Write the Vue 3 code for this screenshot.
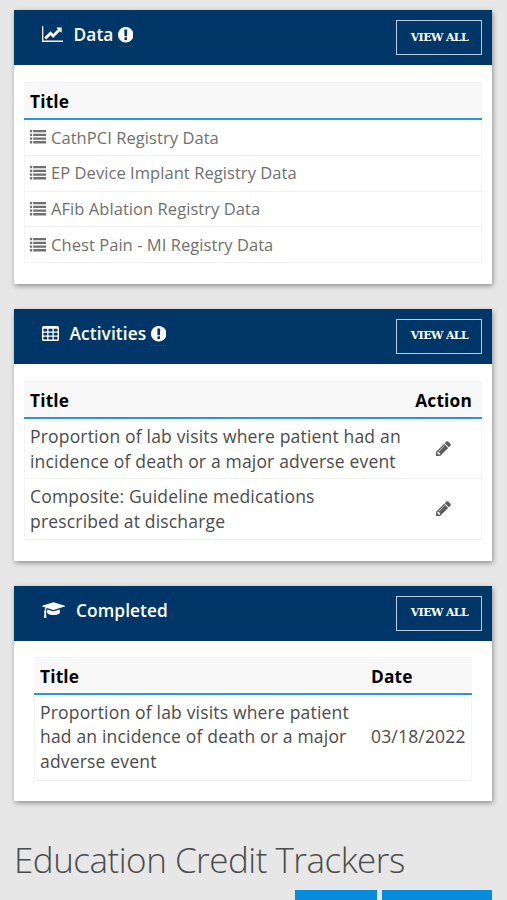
<script setup>
const registries = [
  'CathPCI Registry Data',
  'EP Device Implant Registry Data',
  'AFib Ablation Registry Data',
  'Chest Pain - MI Registry Data',
]
const activities = [
  'Proportion of lab visits where patient had an incidence of death or a major adverse event',
  'Composite: Guideline medications prescribed at discharge',
]
const alertPath = 'M896 128q209 0 385.5 103t279.5 279.5 103 385.5-103 385.5-279.5 279.5-385.5 103-385.5-103-279.5-279.5-103-385.5 103-385.5 279.5-279.5 385.5-103zm128 1247v-190q0-14-9-23.5t-22-9.5h-192q-13 0-23 10t-10 23v190q0 13 10 23t23 10h192q13 0 22-9.5t9-23.5zm-2-344l18-621q0-12-10-18-10-8-24-8h-220q-14 0-24 8-10 6-10 18l17 621q0 10 10 17.5t24 7.5h185q14 0 23.5-7.5t10.5-17.5z'
</script>

<template>
  <main class="page">
    <section class="card data">
      <header class="bar">
        <svg class="chart" viewBox="0 0 2048 1536"><path transform="translate(0 -128)" d="M2048 1536v128h-2048v-1536h128v1408h1920zm-128-1248v435q0 21-19.5 29.5t-35.5-7.5l-121-121-633 633q-10 10-23 10t-23-10l-233-233-416 416-192-192 585-585q10-10 23-10t23 10l233 233 464-464-121-121q-16-16-7.5-35.5t29.5-19.5h435q14 0 23 9t9 23z" /></svg>
        <h2 class="name">Data</h2>
        <span class="alert"><svg viewBox="128 128 1536 1536"><path :d="alertPath" /></svg></span>
        <button class="view">VIEW ALL</button>
      </header>
      <div class="table">
        <div class="thead"><span>Title</span></div>
        <div v-for="item in registries" :key="item" class="row link">
          <svg class="list" viewBox="0 0 16 14">
            <path d="M0 0h2.2v2.3H0zM3.2 0H16v2.3H3.2zM0 3.7h2.2V6H0zM3.2 3.7H16V6H3.2zM0 7.4h2.2v2.3H0zM3.2 7.4H16v2.3H3.2zM0 11.1h2.2v2.3H0zM3.2 11.1H16v2.3H3.2z" />
          </svg>
          <a>{{ item }}</a>
        </div>
      </div>
    </section>

    <section class="card activities">
      <header class="bar">
        <svg class="grid" viewBox="0 0 17 15"><path fill-rule="evenodd" d="M1.5 0h14A1.5 1.5 0 0 1 17 1.5v12a1.5 1.5 0 0 1-1.5 1.5h-14A1.5 1.5 0 0 1 0 13.5v-12A1.5 1.5 0 0 1 1.5 0zM1.4 2.8v2.7h3.8V2.8zM6.5 2.8v2.7h4V2.8zM11.8 2.8v2.7h3.8V2.8zM1.4 6.8v2.7h3.8V6.8zM6.5 6.8v2.7h4V6.8zM11.8 6.8v2.7h3.8V6.8zM1.4 10.8v2.7h3.8v-2.7zM6.5 10.8v2.7h4v-2.7zM11.8 10.8v2.7h3.8v-2.7z" /></svg>
        <h2 class="name">Activities</h2>
        <span class="alert"><svg viewBox="128 128 1536 1536"><path :d="alertPath" /></svg></span>
        <button class="view">VIEW ALL</button>
      </header>
      <div class="table">
        <div class="thead"><span>Title</span><span class="action">Action</span></div>
        <div v-for="item in activities" :key="item" class="row">
          <p class="text">{{ item }}</p>
          <span class="edit">
            <svg viewBox="128 128 1536 1536"><path d="M491 1536l91-91-235-235-91 91v107h128v128h107zm523-928q0-22-22-22-10 0-17 7l-542 542q-7 7-7 17 0 22 22 22 10 0 17-7l542-542q7-7 7-17zm-54-192l416 416-832 832h-416v-416zm683 96q0 53-37 90l-166 166-416-416 166-165q36-38 90-38 53 0 91 38l235 234q37 39 37 91z" /></svg>
          </span>
        </div>
      </div>
    </section>

    <section class="card completed">
      <header class="bar">
        <svg class="cap" viewBox="0 128 2304 1536"><path d="M1774 836l18 316q4 69-82 128t-235 93.5-323 34.5-323-34.5-235-93.5-82-128l18-316 574 181q22 7 48 7t48-7zm530-324q0 23-22 31l-1120 352q-4 1-10 1t-10-1l-652-206q-43 34-71 111.5t-34 178.5q63 36 63 109 0 69-58 107l58 433q2 14-8 25-9 11-24 11h-192q-15 0-24-11-10-11-8-25l58-433q-58-38-58-107 0-73 65-111 11-207 98-330l-333-104q-22-8-22-31t22-31l1120-352q4-1 10-1t10 1l1120 352q22 8 22 31z" /></svg>
        <h2 class="name">Completed</h2>
        <button class="view">VIEW ALL</button>
      </header>
      <div class="table">
        <div class="thead"><span>Title</span><span class="date">Date</span></div>
        <div class="row">
          <p class="text">Proportion of lab visits where patient had an incidence of death or a major adverse event</p>
          <span class="date">03/18/2022</span>
        </div>
      </div>
    </section>

    <h1 class="heading">Education Credit Trackers</h1>
    <div class="tabs"><span class="tab small"></span><span class="tab large"></span></div>
  </main>
</template>

<style>
body { background: #e7e7e7; }
</style>

<style scoped>
.page {
  box-sizing: border-box;
  width: 507px;
  height: 900px;
  padding: 10px 15px 0 14px;
  overflow: hidden;
  background: #e7e7e7;
  color: #4b4b4b;
  font: 17.5px/24.7px "Open Sans", "Noto Sans", sans-serif;
  letter-spacing: 0.18px;
}
.card {
  box-sizing: border-box;
  background: #fff;
  box-shadow: 1px 2px 5px rgba(0, 0, 0, 0.38);
}
.data { height: 274px; margin-bottom: 25px; }
.activities { height: 251.5px; margin-bottom: 25px; }
.completed { height: 215.5px; }
.bar {
  box-sizing: border-box;
  display: flex;
  align-items: flex-start;
  height: 55px;
  padding: 10px 10px 0 28px;
  background: #003768;
  color: #fff;
}
svg { display: block; fill: currentColor; flex: none; }
.chart { width: 21px; height: 16px; margin: 6px 10.5px 0 0; }
.grid { width: 17px; height: 15px; margin: 7px 10.5px 0 0; }
.cap { width: 23px; height: 16px; margin: 6px 11px 0 0; }
.name { margin: 3px 0 0; font-size: 17.3px; font-weight: 600; line-height: 24px; letter-spacing: 0.1px; }
.alert { margin: 7px 0 0 4.5px; padding-bottom: 3px; border-bottom: 1px dotted #2b4c6b; }
.alert svg { width: 15.5px; height: 15.5px; }
.view {
  box-sizing: border-box;
  width: 86px;
  height: 35px;
  margin: 0 -0.4px 0 auto;
  padding: 0;
  border: 1px solid #b9cbdc;
  background: none;
  color: #fff;
  font: bold 11px/16px "Roboto Slab", "DejaVu Serif", serif;
  letter-spacing: -0.6px;
  white-space: nowrap;
}
.completed .view, .activities .view { padding-bottom: 1px; }
.table { margin: 17px 10px 0; border: solid #f4f4f4; border-width: 0 1px; }
.completed .table { margin: 16.5px 20px 0; }
.thead {
  box-sizing: border-box;
  display: flex;
  justify-content: space-between;
  height: 38px;
  margin: 0 -1px;
  padding: 6px 6px 0;
  border-top: 1px solid #f4f4f4;
  border-bottom: 2px solid #2a96dc;
  background: #f8f8f8;
  color: #000;
  font-size: 17.3px;
  font-weight: 700;
}
.data .thead { padding-top: 7px; }
.activities .thead { padding-top: 6.5px; }
.completed .thead { padding-top: 6.5px; }
.row {
  box-sizing: border-box;
  display: flex;
  align-items: center;
  justify-content: space-between;
  padding: 0 5px;
  border-bottom: 1px solid #f1f1f1;
}
.link { justify-content: flex-start; height: 35.8px; padding-top: 1px; color: #707070; font-size: 16.5px; letter-spacing: 0.06px; }
.list { width: 16px; height: 14px; margin: -1px 5px 0 0; }
.text { margin: 0; }
.activities .row { height: 60.3px; }
.activities .text { width: 376px; }
.action { margin-right: 4px; }
.edit { margin-right: 25px; color: #5c5c5c; }
.edit svg { width: 15px; height: 15px; }
.completed .row { height: 85.5px; padding-bottom: 1px; }
.completed .text { width: 315px; }
.date { width: 95px; }
.heading { margin: 35px 0 0; font-size: 35px; font-weight: 300; line-height: 47px; letter-spacing: -0.5px; white-space: nowrap; }
.tabs { display: flex; justify-content: flex-end; gap: 5px; margin-top: 7px; }
.tab { height: 20px; background: #078bdc; }
.small { width: 82px; }
.large { width: 110px; }
</style>
